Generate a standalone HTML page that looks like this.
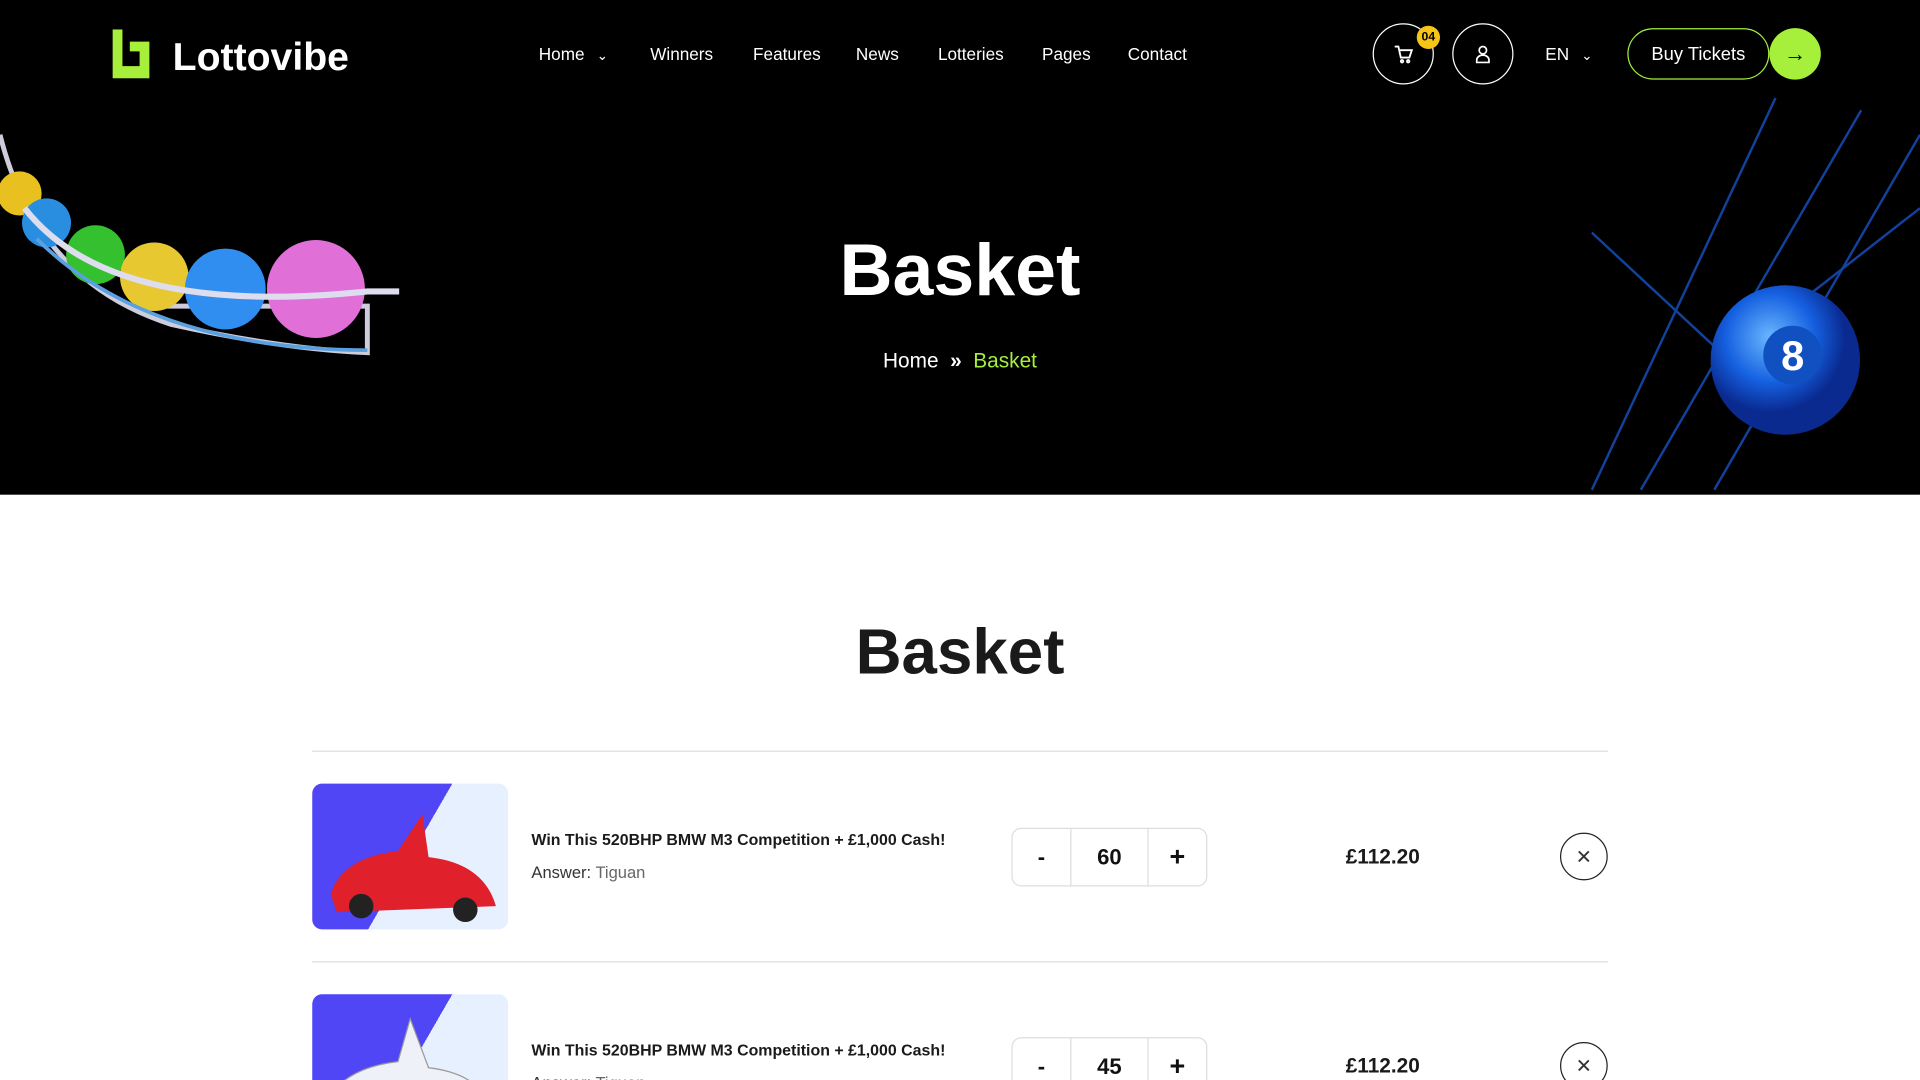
<!DOCTYPE html>
<html><head><meta charset="utf-8"><style>
*{margin:0;padding:0;box-sizing:border-box}
html,body{width:1920px;height:1080px;overflow:hidden;background:#fff;font-family:"Liberation Sans",sans-serif}
#w{width:1568px;height:882px;transform:scale(1.22449);transform-origin:0 0;position:relative;background:#fff;overflow:hidden}
.hero{position:absolute;left:0;top:0;width:1568px;height:404px;background:#000;overflow:hidden}
.a{position:absolute}
.nav{color:#fff;font-size:14px;top:36px}
.circ{position:absolute;border:1.5px solid #fff;border-radius:50%;width:50px;height:50px}
.line{position:absolute;left:255px;width:1058px;height:1px;background:#dcdcdc}
.img{position:absolute;left:255px;width:160px;height:119px;border-radius:8px;overflow:hidden;background:linear-gradient(120deg,#5046f5 0 50%,#e6f0ff 50%)}
.t{position:absolute;left:434px;font-size:13px;font-weight:bold;color:#1a1a1a}
.ans{position:absolute;left:434px;font-size:13.5px;color:#333}
.ans span{color:#666}
.qty{position:absolute;left:826px;width:160px;height:48px;border:1px solid #ddd;border-radius:8px;display:flex}
.qty div{display:flex;align-items:center;justify-content:center;font-size:18px;font-weight:bold;color:#111}
.price{position:absolute;left:1099px;font-size:17px;font-weight:bold;color:#1a1a1a}
.x{position:absolute;left:1274px;width:39px;height:39px;border:1px solid #222;border-radius:50%;display:flex;align-items:center;justify-content:center;font-size:16px;color:#333}
</style></head><body><div id="w">
<div class="hero">
  <svg class="a" style="left:0;top:100px" width="340" height="200">
    <path d="M0 10 Q30 130 140 165 Q230 185 300 188 L300 150 Q200 150 130 150" stroke="#ccd" stroke-width="4" fill="none"/>
    <circle cx="16" cy="58" r="18" fill="#e8c020"/><circle cx="38" cy="82" r="20" fill="#2a8ee0"/>
    <circle cx="78" cy="108" r="24" fill="#35c030"/><circle cx="126" cy="126" r="28" fill="#e8c830"/>
    <circle cx="184" cy="136" r="33" fill="#2f8ef0"/><circle cx="258" cy="136" r="40" fill="#e070d8"/>
    <path d="M20 70 Q90 160 300 138 L326 138" stroke="#dde" stroke-width="5" fill="none"/>
    <path d="M30 95 Q120 185 300 186" stroke="#5aa0e0" stroke-width="3" fill="none"/>
  </svg>
  <svg class="a" style="left:1280px;top:70px" width="288" height="334">
    <defs><radialGradient id="g" cx="40%" cy="35%"><stop offset="0" stop-color="#6ab8ff"/><stop offset=".6" stop-color="#1560e0"/><stop offset="1" stop-color="#0a2a90"/></radialGradient></defs>
    <g stroke="#1a5fe0" stroke-width="2" opacity=".7"><line x1="170" y1="10" x2="20" y2="330"/><line x1="240" y1="20" x2="60" y2="330"/><line x1="288" y1="40" x2="120" y2="330"/><line x1="20" y1="120" x2="160" y2="250"/><line x1="288" y1="100" x2="160" y2="200"/></g>
    <circle cx="178" cy="224" r="61" fill="url(#g)"/>
    <circle cx="184" cy="220" r="24" fill="#1050c0"/>
    <text x="184" y="232" text-anchor="middle" font-size="34" font-weight="bold" fill="#fff" font-family="Liberation Sans">8</text>
  </svg>
  <svg class="a" style="left:88px;top:24px" width="38" height="40"><path d="M4 0h8v30h14v-12h-8v-8h16v30H4z" fill="#a6f03c"/></svg>
  <div class="a" style="left:141px;top:28px;color:#fff;font-size:32px;font-weight:bold">Lottovibe</div>
  <div class="a nav" style="left:440px">Home <span style="font-size:11px;margin-left:6px">&#8964;</span></div>
  <div class="a nav" style="left:531px">Winners</div>
  <div class="a nav" style="left:615px">Features</div>
  <div class="a nav" style="left:699px">News</div>
  <div class="a nav" style="left:766px">Lotteries</div>
  <div class="a nav" style="left:851px">Pages</div>
  <div class="a nav" style="left:921px">Contact</div>
  <div class="circ" style="left:1121px;top:19px"></div>
  <svg class="a" style="left:1138px;top:36px" width="16" height="16" fill="none" stroke="#fff" stroke-width="1.5"><path d="M1 2h3l2 9h7l2-6H5"/><circle cx="7" cy="14" r="1"/><circle cx="12" cy="14" r="1"/></svg>
  <div class="a" style="left:1157px;top:21px;width:19px;height:19px;border-radius:50%;background:#f5c518;font-size:10px;font-weight:bold;display:flex;align-items:center;justify-content:center">04</div>
  <div class="circ" style="left:1186px;top:19px"></div>
  <svg class="a" style="left:1204px;top:36px" width="14" height="16" fill="none" stroke="#fff" stroke-width="1.4"><circle cx="7" cy="5" r="3"/><path d="M2 15v-2a5 4 0 0 1 10 0v2z"/></svg>
  <div class="a nav" style="left:1262px">EN <span style="font-size:11px;margin-left:6px">&#8964;</span></div>
  <div class="a" style="left:1329px;top:23px;width:116px;height:42px;border:1.5px solid #a6f03c;border-radius:21px;color:#fff;font-size:15px;display:flex;align-items:center;justify-content:center">Buy Tickets</div>
  <div class="a" style="left:1445px;top:23px;width:42px;height:42px;border-radius:50%;background:#a6f03c;display:flex;align-items:center;justify-content:center;font-size:18px;font-weight:bold">&#8594;</div>
  <div class="a" style="left:0;width:1568px;top:186px;text-align:center;color:#fff;font-size:60px;font-weight:bold">Basket</div>
  <div class="a" style="left:0;width:1568px;top:285px;text-align:center;color:#fff;font-size:17px">Home &nbsp;<span style="font-weight:bold">&#187;</span>&nbsp; <span style="color:#a6f03c">Basket</span></div>
</div>
<div class="a" style="left:0;width:1568px;top:503px;text-align:center;color:#1a1a1a;font-size:52px;font-weight:bold">Basket</div>
<div class="line" style="top:613px"></div>
<div class="img" style="top:640px"><svg width="160" height="119"><path d="M15 90 Q25 60 70 55 L90 25 L95 60 Q140 65 150 100 L20 105z" fill="#e0202a"/><circle cx="40" cy="100" r="10" fill="#222"/><circle cx="125" cy="103" r="10" fill="#222"/></svg></div>
<div class="t" style="top:678px">Win This 520BHP BMW M3 Competition + £1,000 Cash!</div>
<div class="ans" style="top:705px">Answer: <span>Tiguan</span></div>
<div class="qty" style="top:676px"><div style="width:48px;border-right:1px solid #ddd">-</div><div style="width:63px;border-right:1px solid #ddd">60</div><div style="flex:1;font-size:22px">+</div></div>
<div class="price" style="top:690px">£112.20</div>
<div class="x" style="top:680px">&#10005;</div>
<div class="line" style="top:785px"></div>
<div class="img" style="top:812px"><svg width="160" height="119"><path d="M10 90 Q25 60 70 55 L80 20 L95 60 Q140 65 150 100 L20 105z" fill="#eef2f8" stroke="#999"/></svg></div>
<div class="t" style="top:850px">Win This 520BHP BMW M3 Competition + £1,000 Cash!</div>
<div class="ans" style="top:877px">Answer: <span>Tiguan</span></div>
<div class="qty" style="top:847px"><div style="width:48px;border-right:1px solid #ddd">-</div><div style="width:63px;border-right:1px solid #ddd">45</div><div style="flex:1;font-size:22px">+</div></div>
<div class="price" style="top:861px">£112.20</div>
<div class="x" style="top:851px">&#10005;</div>
</div></body></html>
